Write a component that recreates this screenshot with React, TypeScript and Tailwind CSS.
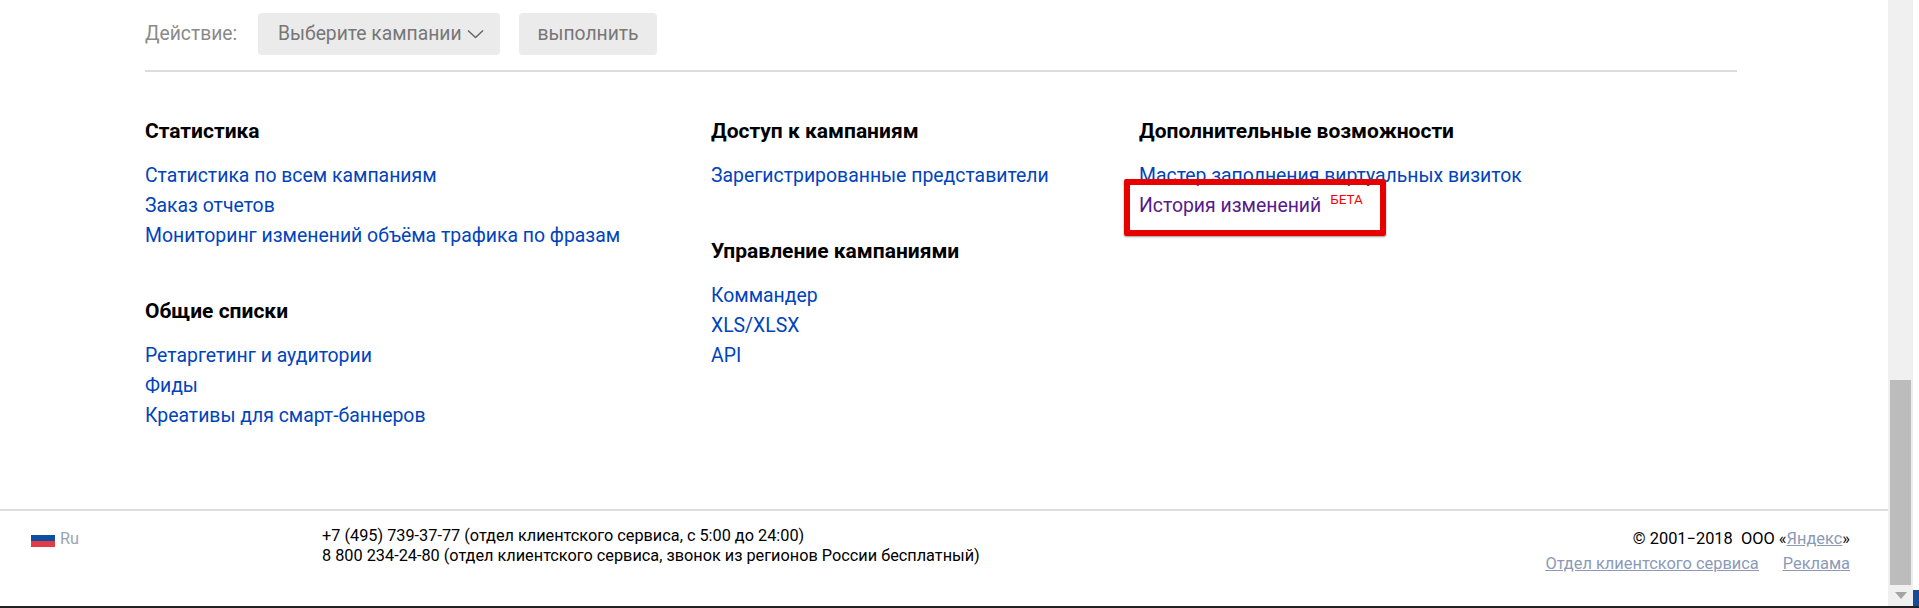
const Link = ({ children }: { children: React.ReactNode }) => (
  <a className="block h-[30px] leading-[30px] text-[19.4px] text-[#0044bb] whitespace-nowrap">{children}</a>
);

const Head = ({ children, className = "" }: { children: React.ReactNode; className?: string }) => (
  <h3 className={"h-[30px] leading-[30px] text-[21px] font-bold text-black mb-[15px] whitespace-nowrap " + className}>{children}</h3>
);

export default function App() {
  return (
    <div className="relative w-[1919px] h-[608px] overflow-hidden bg-white font-['Roboto','Noto_Sans',sans-serif] flex flex-col">
      <div className="flex-1 flex w-full min-h-0">
        <div className="w-[1888px] flex flex-col">
          <main className="h-[511px] shrink-0 pl-[145px] pr-[151px] pt-[13px] border-b-2 border-[#dddddd]">
            <div className="flex items-center h-[42px] text-[19.3px] whitespace-nowrap">
              <span className="text-[#8a8a8a] w-[113px]">Действие:</span>
              <span className="h-[42px] w-[242px] rounded bg-[#ebebeb] text-[#777777] flex items-center pl-[20px] gap-[5px]">
                Выберите кампании
                <svg width="17" height="10" viewBox="0 0 17 10" fill="none" stroke="#666" strokeWidth="1.5"><path d="M1 1.5 8.5 8.5 16 1.5" /></svg>
              </span>
              <span className="h-[42px] w-[138px] ml-[19px] rounded bg-[#ebebeb] text-[#777777] flex items-center justify-center">выполнить</span>
            </div>
            <div className="h-[2px] bg-[#dddddd] mt-[15px]"></div>
            <div className="flex mt-[44px]">
              <div className="w-[566px]">
                <Head>Статистика</Head>
                <Link>Статистика по всем кампаниям</Link>
                <Link>Заказ отчетов</Link>
                <Link>Мониторинг изменений объёма трафика по фразам</Link>
                <Head className="mt-[45px]">Общие списки</Head>
                <Link>Ретаргетинг и аудитории</Link>
                <Link>Фиды</Link>
                <Link>Креативы для смарт-баннеров</Link>
              </div>
              <div className="w-[428px]">
                <Head>Доступ к кампаниям</Head>
                <Link>Зарегистрированные представители</Link>
                <Head className="mt-[45px]">Управление кампаниями</Head>
                <Link>Коммандер</Link>
                <Link>XLS/XLSX</Link>
                <Link>API</Link>
              </div>
              <div className="relative">
                <Head>Дополнительные возможности</Head>
                <Link>Мастер заполнения виртуальных визиток</Link>
                <div className="flex items-start">
                  <a className="h-[30px] leading-[30px] text-[19.4px] text-[#551a8b]">История изменений</a>
                  <span className="ml-[9px] text-[13.5px] leading-[16px] text-[#ff0000]">БЕТА</span>
                </div>
                <div className="absolute left-[-15px] top-[63px] w-[262px] h-[57px] border-[6px] border-[#e60000] rounded-[2px] shadow-[0_1px_2px_rgba(0,0,0,0.4)]"></div>
              </div>
            </div>
          </main>
          <footer className="flex-1 flex pl-[31px] pr-[38px] pt-[15px] text-[16.3px] leading-[20px] whitespace-nowrap">
            <div className="w-[291px] flex items-start">
              <svg width="24" height="12" viewBox="0 0 24 12" className="mt-[9px]"><rect width="24" height="6" y="0" fill="#0b4ea2" /><rect width="24" height="6" y="6" fill="#e23b45" /></svg>
              <span className="text-[#9aa4b2] ml-[5px] mt-[3px]">Ru</span>
            </div>
            <div className="flex-1 text-black">
              <div>+7 (495) 739-37-77 (отдел клиентского сервиса, с 5:00 до 24:00)</div>
              <div>8 800 234-24-80 (отдел клиентского сервиса, звонок из регионов России бесплатный)</div>
            </div>
            <div className="text-right text-[16.4px] leading-[25px]">
              <div className="text-black">© 2001−2018&nbsp; ООО «<a className="underline text-[#8c9ab8]">Яндекс</a>»</div>
              <div className="flex gap-[24px] justify-end text-[#8c9ab8] underline"><a>Отдел клиентского сервиса</a><a>Реклама</a></div>
            </div>
          </footer>
        </div>
        <div className="w-[25px] bg-[#f0f0f0] flex flex-col items-center">
          <div className="flex-1"></div>
          <div className="w-[21px] h-[205px] bg-[#bcbcbc]"></div>
          <div className="h-[21px] flex items-center justify-center">
            <svg width="12" height="7" viewBox="0 0 12 7"><path d="M0 0h12L6 7z" fill="#a3a3a3" /></svg>
          </div>
        </div>
        <div className="w-[6px] flex flex-col justify-end">
          <div className="h-[16px] bg-[#1a4a96]"></div>
        </div>
      </div>
      <div className="h-[2px] bg-[#222222] shrink-0"></div>
    </div>
  );
}
